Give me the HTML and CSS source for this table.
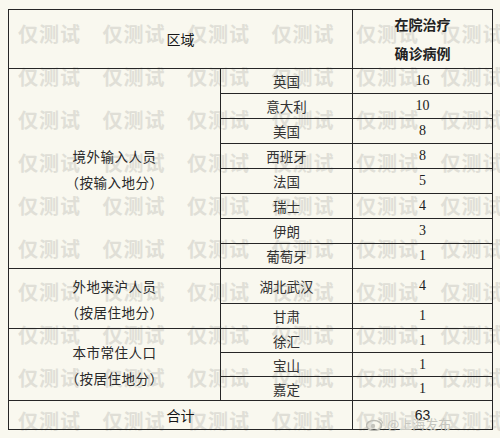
FILE: index.html
```html
<!DOCTYPE html>
<html lang="zh-CN">
<head>
<meta charset="utf-8">
<title>在院治疗确诊病例</title>
<link rel="stylesheet" href="styles.css">
</head>
<body>
<div class="page">
  <div class="watermark" aria-hidden="true">
    <span>仅测试</span><span>仅测试</span><span>仅测试</span><span>仅测试</span><span>仅测试</span><span>仅测试</span>
    <span>仅测试</span><span>仅测试</span><span>仅测试</span><span>仅测试</span><span>仅测试</span><span>仅测试</span>
    <span>仅测试</span><span>仅测试</span><span>仅测试</span><span>仅测试</span><span>仅测试</span><span>仅测试</span>
    <span>仅测试</span><span>仅测试</span><span>仅测试</span><span>仅测试</span><span>仅测试</span><span>仅测试</span>
    <span>仅测试</span><span>仅测试</span><span>仅测试</span><span>仅测试</span><span>仅测试</span><span>仅测试</span>
    <span>仅测试</span><span>仅测试</span><span>仅测试</span><span>仅测试</span><span>仅测试</span><span>仅测试</span>
    <span>仅测试</span><span>仅测试</span><span>仅测试</span><span>仅测试</span><span>仅测试</span><span>仅测试</span>
    <span>仅测试</span><span>仅测试</span><span>仅测试</span><span>仅测试</span><span>仅测试</span><span>仅测试</span>
    <span>仅测试</span><span>仅测试</span><span>仅测试</span><span>仅测试</span><span>仅测试</span><span>仅测试</span>
    <span>仅测试</span><span>仅测试</span><span>仅测试</span><span>仅测试</span><span>仅测试</span><span>仅测试</span>
  </div>

  <table class="cases">
    <colgroup>
      <col class="c-region">
      <col class="c-place">
      <col class="c-num">
    </colgroup>
    <thead>
      <tr class="r-head">
        <th colspan="2">区域</th>
        <th class="two-line">在院治疗<br>确诊病例</th>
      </tr>
    </thead>
    <tbody>
      <tr>
        <td rowspan="8" class="group">境外输入人员<br>（按输入地分）</td>
        <td class="place">英国</td><td class="num">16</td>
      </tr>
      <tr><td class="place">意大利</td><td class="num">10</td></tr>
      <tr><td class="place">美国</td><td class="num">8</td></tr>
      <tr><td class="place">西班牙</td><td class="num">8</td></tr>
      <tr><td class="place">法国</td><td class="num">5</td></tr>
      <tr><td class="place">瑞士</td><td class="num">4</td></tr>
      <tr><td class="place">伊朗</td><td class="num">3</td></tr>
      <tr><td class="place">葡萄牙</td><td class="num">1</td></tr>
      <tr class="r-tall">
        <td rowspan="2" class="group">外地来沪人员<br>（按居住地分）</td>
        <td class="place">湖北武汉</td><td class="num">4</td>
      </tr>
      <tr><td class="place">甘肃</td><td class="num">1</td></tr>
      <tr class="r-short">
        <td rowspan="3" class="group">本市常住人口<br>（按居住地分）</td>
        <td class="place">徐汇</td><td class="num">1</td>
      </tr>
      <tr class="r-short"><td class="place">宝山</td><td class="num">1</td></tr>
      <tr class="r-short"><td class="place">嘉定</td><td class="num">1</td></tr>
      <tr class="r-total">
        <td colspan="2" class="total">合计</td>
        <td class="num sum">63</td>
      </tr>
    </tbody>
  </table>

  <div class="weibo" aria-hidden="true">
    <svg class="weibo-logo" width="18" height="14" viewBox="0 0 18 14">
      <ellipse cx="8" cy="8.5" rx="7.5" ry="5" fill="none" stroke="#bdbdb6" stroke-width="1.6"/>
      <circle cx="7" cy="9" r="2.2" fill="#c4c4bd"/>
      <path d="M12.5 2.5a4 4 0 0 1 4 4" fill="none" stroke="#c4c4bd" stroke-width="1.4"/>
    </svg>
    <span>@上海发布</span>
  </div>
</div>
</body>
</html>
```

FILE: styles.css
```css
html, body {
  margin: 0;
  padding: 0;
  background: #f9f8ef;
}

.page {
  position: relative;
  width: 500px;
  height: 438px;
  padding: 9px 0 0 8px;
  box-sizing: border-box;
  font-family: "Noto Sans CJK SC", "Noto Sans", sans-serif;
  color: #2a2a2a;
}

.watermark {
  position: absolute;
  left: 0;
  top: 0;
  width: 520px;
  height: 438px;
  padding: 12px 0 0 18px;
  box-sizing: border-box;
  display: grid;
  grid-template-columns: repeat(6, 84.5px);
  grid-auto-rows: 43px;
  align-items: start;
  font-family: "Noto Sans CJK SC", sans-serif;
  font-weight: 700;
  font-size: 20px;
  line-height: 43px;
  letter-spacing: 1px;
  color: #e0dfd7;
  overflow: hidden;
  z-index: 0;
  white-space: nowrap;
}

.cases {
  position: relative;
  z-index: 1;
  border-collapse: collapse;
  table-layout: fixed;
  width: 484px;
  font-size: 13.5px;
}

.c-region { width: 212px; }
.c-place { width: 132px; }
.c-num { width: 140px; }

.cases th,
.cases td {
  border: 1px solid #262626;
  padding: 0;
  text-align: center;
  vertical-align: middle;
  font-weight: 400;
}

.cases tr { height: 25px; }
.cases .r-head { height: 56px; }
.cases .r-tall { height: 35px; }
.cases .r-short { height: 24px; }
.cases .r-total { height: 29px; }

.cases th {
  color: #151515;
  font-size: 14px;
}

.cases th.two-line {
  line-height: 29px;
  font-weight: 700;
  color: #222;
}

.group {
  line-height: 26px;
  color: #2a2a2a;
  letter-spacing: 0.5px;
}

.place {
  color: #333;
}

.num {
  font-family: "Liberation Serif", "DejaVu Serif", serif;
  font-size: 14px;
  color: #222;
}

.sum {
  font-family: "Liberation Sans", sans-serif;
  font-size: 14px;
  vertical-align: top;
  padding-top: 3px;
}

.total {
  color: #151515;
  font-size: 14px;
}

.weibo {
  position: absolute;
  left: 366px;
  top: 414px;
  display: flex;
  align-items: center;
  gap: 3px;
  font-size: 13px;
  color: #c6c6bf;
  z-index: 2;
  white-space: nowrap;
}
```
